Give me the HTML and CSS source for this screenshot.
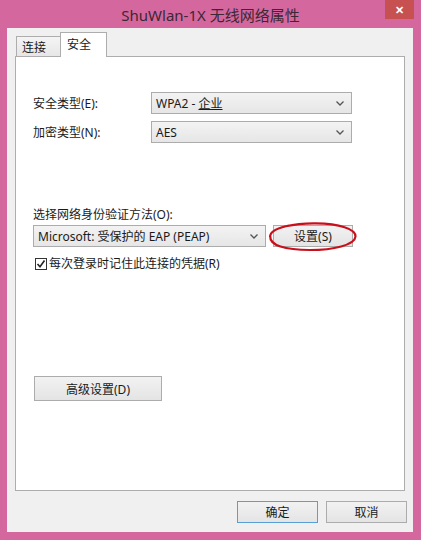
FILE: index.html
```html
<!DOCTYPE html>
<html lang="zh-CN">
<head>
    <meta charset="UTF-8">
    <meta name="viewport" content="width=device-width, initial-scale=1.0">
    <title>ShuWlan-1X 无线网络属性</title>
    <link rel="stylesheet" href="styles.css">
</head>
<body>

    <div class="window">
        <div class="titlebar">
            <span></span>
            <div class="title">ShuWlan-1X 无线网络属性</div>
            <div class="close">&#x2715;</div>
        </div>

        <div class="client">
            <div class="tabs">
                <div class="tab">连接</div>
                <div class="tab active">安全</div>
            </div>

            <div class="panel">
                <div class="form-row">
                    <label>安全类型(E):</label>
                    <div class="select">
                        <span>WPA2 - <u>企业</u></span>
                        <svg width="8" height="5" viewBox="0 0 8 5"><path d="M0.5 0.5 L4 4 L7.5 0.5" fill="none" stroke="#555" stroke-width="1.3"/></svg>
                    </div>
                </div>
                <div class="form-row">
                    <label>加密类型(N):</label>
                    <div class="select">
                        <span>AES</span>
                        <svg width="8" height="5" viewBox="0 0 8 5"><path d="M0.5 0.5 L4 4 L7.5 0.5" fill="none" stroke="#555" stroke-width="1.3"/></svg>
                    </div>
                </div>

                <div class="method-label">选择网络身份验证方法(O):</div>
                <div class="method-row">
                    <div class="select wide">
                        <span>Microsoft: 受保护的 EAP (PEAP)</span>
                        <svg width="8" height="5" viewBox="0 0 8 5"><path d="M0.5 0.5 L4 4 L7.5 0.5" fill="none" stroke="#555" stroke-width="1.3"/></svg>
                    </div>
                    <div class="annotated">
                        <button class="btn settings">设置(S)</button>
                        <svg class="circle" width="92" height="32" viewBox="0 0 92 32">
                            <path d="M3 16 C3 6 30 2 49 2.3 C72 2.6 89 8 88.5 15.5 C88 24 66 29 43 29 C18 29 2.5 24.5 3.2 15 C3.8 9.5 12 6.5 22 4.5" fill="none" stroke="#c8101c" stroke-width="2.2"/>
                        </svg>
                    </div>
                </div>

                <div class="check-row">
                    <span class="checkbox">
                        <svg width="10" height="10" viewBox="0 0 10 10"><path d="M1.5 5 L4 7.8 L8.5 1.5" fill="none" stroke="#222" stroke-width="1.6"/></svg>
                    </span>
                    <span>每次登录时记住此连接的凭据(R)</span>
                </div>

                <button class="btn advanced">高级设置(D)</button>
            </div>

            <div class="footer">
                <button class="btn default">确定</button>
                <button class="btn">取消</button>
            </div>
        </div>
    </div>

</body>
</html>
```

FILE: styles.css
```css
body {
    margin: 0;
    padding: 0;
    background-color: #d5679f;
    font-family: "Noto Sans", "Noto Sans CJK SC", sans-serif;
    font-size: 12px;
    color: #1a1a1a;
}
.window {
    width: 421px;
    height: 540px;
    display: flex;
    flex-direction: column;
}
.titlebar {
    height: 28px;
    display: grid;
    grid-template-columns: 1fr auto 1fr;
    align-items: start;
}
.title {
    padding-top: 2px;
    line-height: 26px;
    font-size: 15px;
    color: #3b2833;
}
.close {
    justify-self: end;
    margin-right: 7px;
    width: 29px;
    height: 19px;
    line-height: 19px;
    text-align: center;
    background-color: #c75050;
    color: #fff;
    font-size: 11px;
    font-weight: bold;
}
.client {
    flex: 1;
    margin: 0 8px 8px 7px;
    padding: 5px 8px 0 8px;
    background-color: #f0f0f0;
    display: flex;
    flex-direction: column;
}
.tabs {
    display: flex;
    align-items: flex-end;
    height: 24px;
    padding-left: 1px;
    margin-bottom: -1px;
}
.tab {
    width: 44px;
    height: 21px;
    box-sizing: border-box;
    padding-left: 5px;
    line-height: 22px;
    border: 1px solid #adadad;
    border-right: none;
    border-bottom: none;
    background: linear-gradient(#f4f4f4, #e6e6e6);
}
.tab.active {
    width: 47px;
    height: 25px;
    padding-left: 6px;
    line-height: 24px;
    border-right: 1px solid #adadad;
    background: #fff;
    position: relative;
    z-index: 1;
}
.panel {
    height: 435px;
    box-sizing: border-box;
    border: 1px solid #adadad;
    background-color: #fff;
    padding: 35px 0 0 17px;
    display: flex;
    flex-direction: column;
}
.form-row {
    display: grid;
    grid-template-columns: 118px 201px;
    align-items: center;
    margin-bottom: 7px;
}
.select {
    height: 22px;
    box-sizing: border-box;
    border: 1px solid #acacac;
    background: linear-gradient(#f3f3f3, #e6e6e6);
    display: flex;
    align-items: center;
    justify-content: space-between;
    padding: 0 7px 0 4px;
}
.select.wide {
    width: 233px;
}
.method-label {
    margin-top: 57px;
    line-height: 16px;
}
.method-row {
    display: flex;
    gap: 7px;
    margin-top: 2px;
}
.annotated {
    position: relative;
}
.circle {
    position: absolute;
    left: -6px;
    top: -4px;
}
.btn {
    font-family: inherit;
    font-size: 12px;
    color: #1a1a1a;
    border: 1px solid #acacac;
    background: linear-gradient(#f2f2f2, #e4e4e4);
    padding: 0;
    box-sizing: border-box;
}
.settings {
    width: 80px;
    height: 22px;
}
.check-row {
    display: flex;
    align-items: center;
    gap: 2px;
    margin: 9px 0 0 2px;
    line-height: 16px;
}
.checkbox {
    width: 12px;
    height: 12px;
    box-sizing: border-box;
    border: 1px solid #333;
    background-color: #fff;
    display: flex;
    align-items: center;
    justify-content: center;
}
.advanced {
    width: 128px;
    height: 25px;
    margin: 104px 0 0 1px;
}
.footer {
    display: flex;
    justify-content: flex-end;
    gap: 8px;
    margin: 10px -2px 0 0;
}
.footer .btn {
    width: 81px;
    height: 22px;
}
.footer .btn.default {
    border-color: #5a9fd4;
}
```
